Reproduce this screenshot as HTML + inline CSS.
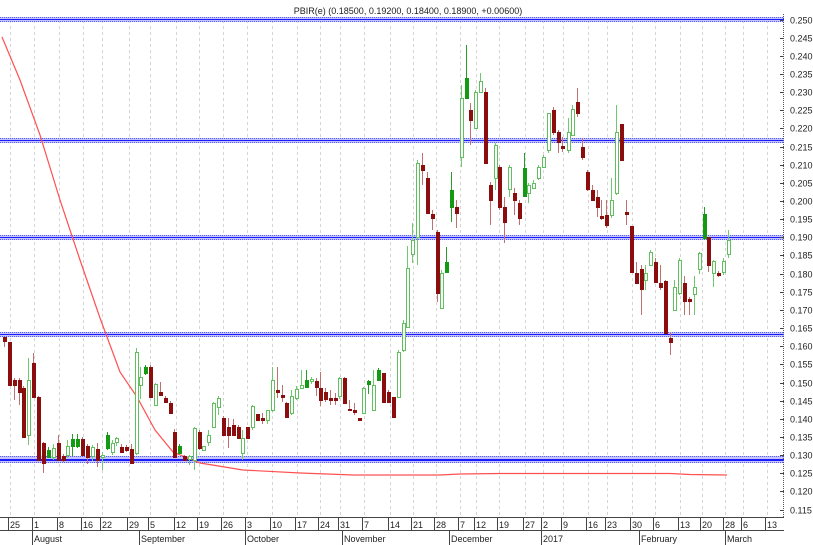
<!DOCTYPE html>
<html><head><meta charset="utf-8"><style>
html,body{margin:0;padding:0;background:#fff;}
body{width:813px;height:545px;overflow:hidden;position:relative;font-family:"Liberation Sans",sans-serif;}
svg{position:absolute;left:0;top:0;}
text{font-family:"Liberation Sans",sans-serif;font-size:9px;fill:#222;}
</style></head><body>
<svg id="s" width="813" height="545" viewBox="0 0 813 545" shape-rendering="crispEdges">
<g id="grid" stroke="#d4d4d4" stroke-dasharray="3,3" stroke-width="1"></g>
<text x="408" y="14" text-anchor="middle">PBIR(e) (0.18500, 0.19200, 0.18400, 0.18900, +0.00600)</text>
<g id="blue"></g>
<polyline fill="none" stroke="#ff5050" stroke-width="1.2" shape-rendering="auto" points="2,37 20,80 40,135 60,200 80,260 100,318 120,372 137,397 155,430 173,452 200,463 243,470 300,473 353,475 440,475 460,474 500,473.5 670,473.5 690,474.5 727,475"/>
<g id="c"></g>
<g id="axis"></g>
<line x1="0" y1="517.5" x2="784" y2="517.5" stroke="#444"/>
<line x1="0" y1="530.5" x2="784" y2="530.5" stroke="#444"/>
<line x1="783.5" y1="14" x2="783.5" y2="517" stroke="#555" stroke-dasharray="1,1"/>
<g id="days"></g>
<g id="months"></g>
</svg>
<script>
var NS="http://www.w3.org/2000/svg";
function el(p,t,a,txt){var e=document.createElementNS(NS,t);for(var k in a)e.setAttribute(k,a[k]);if(txt!=null)e.textContent=txt;document.getElementById(p).appendChild(e);return e;}
var ticks=[[10,"25"],[34,"1"],[59,"8"],[83,"16"],[102,"22"],[129,"29"],[150,"5"],[176,"12"],[199,"19"],[223,"26"],[247,"3"],[272,"10"],[297,"17"],[320,"24"],[340,"31"],[364,"7"],[390,"14"],[413,"21"],[436,"28"],[460,"7"],[476,"12"],[499,"19"],[525,"27"],[543,"2"],[563,"9"],[588,"16"],[607,"23"],[632,"30"],[655,"6"],[680,"13"],[702,"20"],[725,"28"],[743,"6"],[767,"13"]];
ticks.forEach(function(t){
 el("grid","line",{x1:t[0]+.5,y1:20,x2:t[0]+.5,y2:517});
 el("days","line",{x1:t[0]-1.5,y1:518,x2:t[0]-1.5,y2:530,stroke:"#444"});
 el("days","text",{x:t[0],y:528},t[1]);
});
[[34,"August"],[141,"September"],[247,"October"],[344,"November"],[451,"December"],[543,"2017"],[641,"February"],[727,"March"]].forEach(function(m){
 el("months","line",{x1:m[0]-1.5,y1:531,x2:m[0]-1.5,y2:545,stroke:"#444"});
 el("months","text",{x:m[0],y:542},m[1]);
});
for(var i=0;i<=27;i++){var p=0.25-i*0.005,y=19.5+i*18.15;
 el("axis","line",{x1:780,y1:Math.round(y)+.5,x2:784,y2:Math.round(y)+.5,stroke:"#444"});
 el("axis","text",{x:790,y:Math.round(y)+3.5},p.toFixed(3));}
[[19,0],[140,0],[237,0],[334,0],[459,1]].forEach(function(b){
 var y=b[0],ext=b[1];
 el("blue","rect",{x:0,y:y-2-ext,width:784,height:5+2*ext,fill:"#c4c4ff"});
 el("blue","line",{x1:0,y1:y-1.5-ext,x2:784,y2:y-1.5-ext,stroke:"#5a5aff","stroke-dasharray":"1,1"});
 el("blue","line",{x1:0,y1:y+2.5+ext,x2:784,y2:y+2.5+ext,stroke:"#5a5aff","stroke-dasharray":"1,1"});
 el("blue","rect",{x:0,y:y,width:784,height:1+ext,fill:"#1a1aff"});
});
var C=[
[4,337,347,337,341,"D"],[9,342,385,342,385,"D"],[14,378,400,380,385,"D"],[19,378,405,380,392,"D"],[23,386,437,388,437,"D"],[28,358,445,380,435,"G"],[33,353,398,363,397,"D"],[38,396,460,397,460,"D"],[43,442,473,443,463,"D"],[48,447,458,450,457,"F"],[53,444,460,448,457,"G"],[58,435,461,443,460,"D"],[63,454,462,456,460,"D"],[67,440,458,446,455,"G"],[72,434,456,439,446,"F"],[77,434,448,439,446,"F"],[82,437,456,439,455,"D"],[87,444,464,446,457,"D"],[92,445,461,447,456,"G"],[97,443,467,449,460,"D"],[102,452,470,455,457,"G"],[107,432,450,435,448,"F"],[112,440,455,443,452,"G"],[116,437,446,438,442,"G"],[121,444,453,447,452,"D"],[126,445,452,447,450,"D"],[131,444,464,449,463,"D"],[136,348,455,352,453,"G"],[140,367,399,377,385,"G"],[145,365,375,367,373,"F"],[150,365,398,367,397,"D"],[155,383,405,384,405,"G"],[160,382,396,392,395,"D"],[165,396,402,398,402,"D"],[170,401,414,403,413,"D"],[174,429,457,432,457,"D"],[179,444,454,446,453,"F"],[184,455,460,456,460,"D"],[189,455,465,456,459,"G"],[194,427,470,428,460,"G"],[199,430,450,432,448,"D"],[203,446,451,446,450,"G"],[208,430,446,435,442,"G"],[213,402,427,403,427,"G"],[218,396,415,398,407,"G"],[223,416,436,418,435,"D"],[228,418,448,427,435,"D"],[233,419,436,425,435,"D"],[238,425,438,427,438,"D"],[242,430,460,438,453,"G"],[247,427,438,427,438,"D"],[252,405,430,406,427,"G"],[257,414,421,414,420,"D"],[262,413,424,418,420,"D"],[267,410,424,410,420,"G"],[272,367,412,380,410,"G"],[277,367,398,390,392,"D"],[282,385,402,395,397,"D"],[286,402,417,403,417,"D"],[291,390,415,396,413,"G"],[296,386,400,389,398,"G"],[301,370,388,385,388,"G"],[306,370,388,380,387,"F"],[311,377,384,379,381,"G"],[316,378,396,381,387,"D"],[320,372,406,388,400,"D"],[325,388,402,392,399,"D"],[330,390,405,398,400,"D"],[335,393,405,398,400,"D"],[339,377,399,378,396,"G"],[344,377,404,378,403,"D"],[349,400,411,409,410,"D"],[354,403,415,410,412,"D"],[359,418,420,418,420,"D"],[363,387,413,388,413,"G"],[368,380,394,381,384,"F"],[373,370,410,385,410,"G"],[378,368,380,370,380,"F"],[383,373,402,373,402,"D"],[388,390,402,392,402,"D"],[393,397,417,397,417,"D"],[398,350,397,352,397,"G"],[403,320,352,323,350,"G"],[407,246,327,268,327,"G"],[412,223,263,240,254,"G"],[417,160,265,163,237,"G"],[422,153,185,165,170,"D"],[427,172,214,178,213,"D"],[432,210,230,214,218,"D"],[437,230,302,232,293,"D"],[441,270,308,273,308,"G"],[446,247,273,262,272,"F"],[451,172,222,190,207,"F"],[456,200,228,207,213,"D"],[461,85,167,98,157,"G"],[466,45,98,78,98,"F"],[470,103,145,110,120,"D"],[475,90,128,92,128,"G"],[480,73,92,81,92,"G"],[485,88,163,92,163,"D"],[490,182,225,185,200,"D"],[495,143,190,145,178,"G"],[499,165,210,167,207,"D"],[504,197,243,207,222,"D"],[509,165,197,167,189,"G"],[514,188,215,193,200,"D"],[519,200,225,203,218,"D"],[524,153,196,168,196,"F"],[528,183,203,185,193,"G"],[533,180,188,183,188,"G"],[538,165,180,167,178,"G"],[543,155,168,157,167,"G"],[548,113,153,113,150,"G"],[553,107,135,110,132,"D"],[558,130,153,132,142,"D"],[562,137,152,146,148,"D"],[568,118,153,132,150,"G"],[572,105,135,109,135,"G"],[577,88,117,102,113,"D"],[582,138,160,147,157,"D"],[587,170,191,172,189,"D"],[592,185,201,190,200,"D"],[597,190,217,197,207,"D"],[601,200,220,216,218,"D"],[606,200,228,215,225,"D"],[611,178,218,200,215,"G"],[616,105,195,132,193,"G"],[621,124,160,124,160,"D"],[626,200,225,212,214,"D"],[631,226,272,226,272,"D"],[636,262,283,273,283,"D"],[641,265,315,269,289,"D"],[645,265,290,273,280,"G"],[650,250,266,252,265,"G"],[655,258,283,262,282,"D"],[660,265,290,283,287,"D"],[665,280,333,281,333,"D"],[670,332,355,338,342,"D"],[674,280,310,287,310,"G"],[679,258,295,260,293,"G"],[684,276,315,283,301,"D"],[689,297,315,299,301,"D"],[694,276,315,287,294,"G"],[699,252,274,253,269,"G"],[704,207,240,214,238,"F"],[708,237,272,237,265,"D"],[713,260,287,261,273,"G"],[718,271,277,273,275,"D"],[723,258,275,261,272,"G"],[728,230,258,240,254,"G"]];
C.forEach(function(c){
 var x=c[0],t=c[5];
 var wc=t=="D"?"#c07070":(t=="F"?"#2a9a2a":"#70c870");
 el("c","line",{x1:x+.5,y1:c[1],x2:x+.5,y2:c[2],stroke:wc});
 var h=Math.max(c[4]-c[3],1);
 if(t=="D")el("c","rect",{x:x-1,y:c[3],width:4,height:h+1,fill:"#8b0d0d"});
 else if(t=="F")el("c","rect",{x:x-1,y:c[3],width:4,height:h+1,fill:"#139a13"});
 else el("c","rect",{x:x-1+.5,y:c[3]+.5,width:3,height:h,fill:"#fff",stroke:"#60c060"});
});
</script>
</body></html>
